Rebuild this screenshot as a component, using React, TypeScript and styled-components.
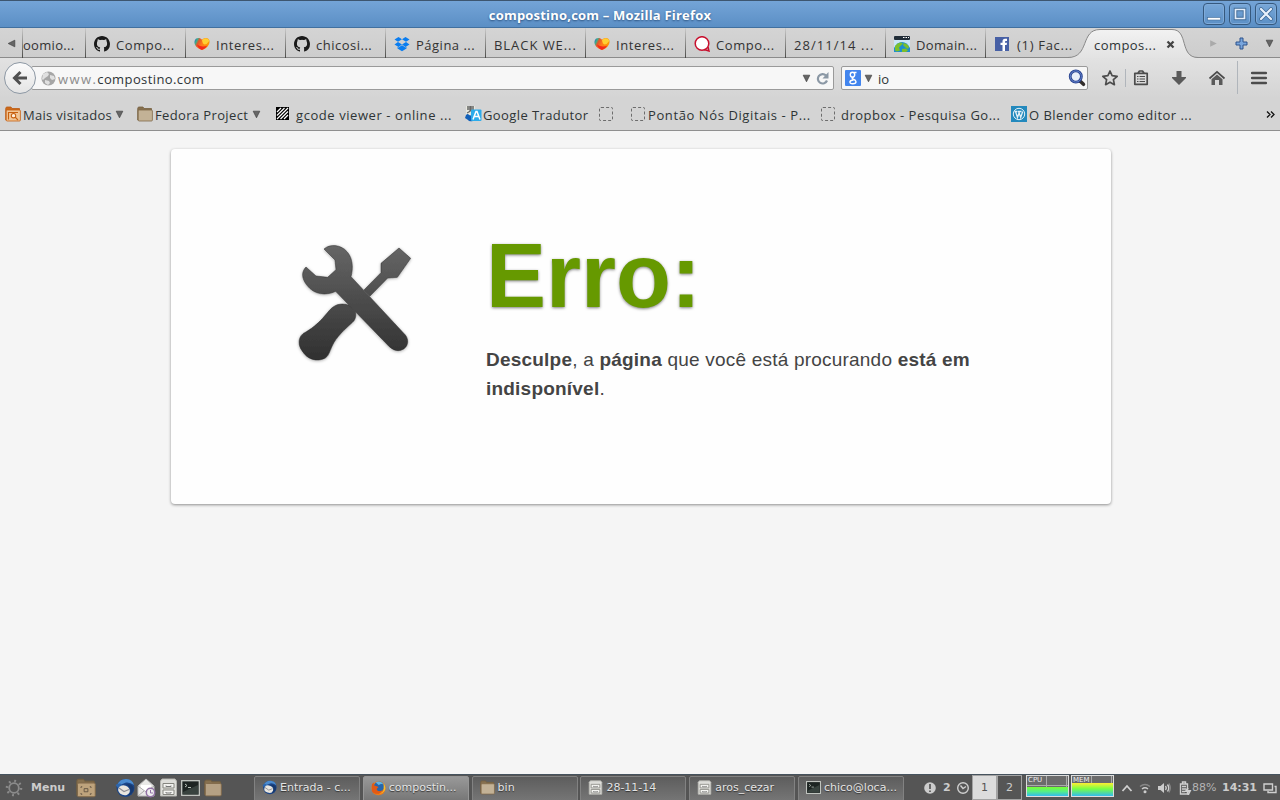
import React from "react";
import styled, { createGlobalStyle } from "styled-components";

const uiFont = `"Open Sans", "Noto Sans", sans-serif`;
const panelFont = `"DejaVu Sans", sans-serif`;

const GlobalStyle = createGlobalStyle`
  html, body { margin: 0; padding: 0; overflow: hidden; }
  * { box-sizing: border-box; }
  svg { display: block; flex: none; }
`;

const Desktop = styled.div`
  width: 1280px;
  height: 800px;
  display: flex;
  flex-direction: column;
  overflow: hidden;
  background: #f5f5f5;
  font-family: ${uiFont};
  font-size: 13px;
  color: #2e3436;
`;

const Label = styled.span<{ $ls?: number; $ml?: number; $w?: number }>`
  flex: none;
  white-space: pre;
  letter-spacing: ${(p) => p.$ls ?? 0}px;
  margin-left: ${(p) => p.$ml ?? 0}px;
  ${(p) => (p.$w !== undefined ? `width: ${p.$w}px;` : "")}
`;

const IconSlot = styled.span<{ $ml?: number; $mt?: number }>`
  flex: none;
  margin-left: ${(p) => p.$ml ?? 0}px;
  margin-top: ${(p) => p.$mt ?? 0}px;
`;

/* ---------- title bar ---------- */

const TitleBar = styled.header`
  height: 28px;
  flex: none;
  display: grid;
  grid-template-columns: 1200px 80px;
  border-top: 1px solid #3d5670;
  border-bottom: 1px solid #41709f;
  background: linear-gradient(#74a4d7, #5b8fc5);
`;

const WindowTitle = styled.h1`
  margin: 0;
  padding-top: 1px;
  text-align: center;
  font-size: 13px;
  line-height: 26px;
  font-weight: 700;
  color: #fff;
  letter-spacing: 0.2px;
  text-shadow: 0 1px 2px #2c5380;
`;

const WindowButtons = styled.div`
  display: flex;
  gap: 4px;
  padding: 2px 0 0 3px;
`;

const WindowButton = styled.button`
  width: 22px;
  height: 22px;
  padding: 0;
  display: grid;
  place-items: center;
  border: 1px solid #36597e;
  border-radius: 4px;
  background: linear-gradient(#78a7d8, #5c90c6);
  box-shadow: inset 0 0 0 1px #7fabd9;
`;

/* ---------- tabs ---------- */

const TabBar = styled.nav`
  height: 30px;
  flex: none;
  display: flex;
  background: linear-gradient(#d4d4d4, #cdcdcd);
  box-shadow: inset 0 -1px #8b8b8b;
`;

const ScrollLeft = styled.div`
  width: 22px;
  display: flex;
  padding: 11px 0 0 7px;
`;

const Tab = styled.div<{ $w: number; $last?: boolean }>`
  width: ${(p) => p.$w}px;
  height: 30px;
  flex: none;
  display: flex;
  align-items: center;
  padding: 3px 0 0 8px;
  overflow: hidden;
  color: #333;
  border-right: ${(p) => (p.$last ? 0 : 1)}px solid;
  border-image: linear-gradient(#cfcfcf, #474744) 1;
`;

const ClippedTab = styled(Tab)`
  padding-left: 0;
  border-left: 1px solid;
`;

const ActiveTab = styled.div`
  width: 130px;
  height: 30px;
  margin-left: -14px;
  flex: none;
  display: grid;
  position: relative;
  > * { grid-area: 1 / 1; }
`;

const ActiveTabContent = styled.div`
  display: flex;
  align-items: center;
  padding: 3px 0 0 26px;
  z-index: 1;
`;

const TabTools = styled.div`
  display: flex;
  padding-top: 9px;
`;

/* ---------- navigation ---------- */

const NavBar = styled.div`
  height: 40px;
  flex: none;
  display: flex;
  align-items: flex-start;
  background: linear-gradient(#e2e2e2, #d4d4d4);
`;

const BackButton = styled.button`
  width: 32px;
  height: 32px;
  margin: 4px 0 0 4px;
  padding: 0;
  flex: none;
  display: grid;
  place-items: center;
  border: 1px solid #8d98a4;
  border-radius: 50%;
  background: linear-gradient(#fbfbfb, #e4e4e4);
  z-index: 1;
`;

const Field = styled.div<{ $w: number; $ml: number; $pl: number }>`
  width: ${(p) => p.$w}px;
  height: 24px;
  margin: 8px 0 0 ${(p) => p.$ml}px;
  padding-left: ${(p) => p.$pl}px;
  flex: none;
  display: flex;
  align-items: center;
  border: 1px solid #9a9a9a;
  border-radius: 2px;
  background: #f7f7f7;
`;

const FieldText = styled(Label)`
  padding-top: 2px;
`;

const Muted = styled.span`
  color: #8c8c8c;
  letter-spacing: 1.4px;
`;

const NavSeparator = styled.i<{ $ml: number; $mt: number; $h: number }>`
  width: 1px;
  height: ${(p) => p.$h}px;
  margin: ${(p) => p.$mt}px 0 0 ${(p) => p.$ml}px;
  background: #b0b5bb;
`;

/* ---------- bookmarks ---------- */

const Bookmarks = styled.div`
  height: 33px;
  flex: none;
  display: flex;
  align-items: center;
  padding-top: 1px;
  background: #d4d4d4;
  border-bottom: 1px solid #8f8f8f;
`;

const EmptyIcon = styled.i<{ $ml: number }>`
  width: 14px;
  height: 14px;
  flex: none;
  margin: -2px 0 0 ${(p) => p.$ml}px;
  border: 1px dashed #6d6d6d;
  border-radius: 2px;
`;

/* ---------- page ---------- */

const Page = styled.main`
  flex: 1;
  padding-top: 18px;
  background: #f5f5f5;
`;

const Card = styled.section`
  width: 940px;
  height: 355px;
  margin-left: 171px;
  display: flex;
  background: #fefefe;
  border-radius: 4px;
  box-shadow: 0 1px 3px rgba(0, 0, 0, 0.42);
  font-family: "Liberation Sans", Arial, sans-serif;
  color: #444;
`;

const ToolsPicture = styled.div`
  width: 315px;
  flex: none;
  padding: 81px 0 0 109px;
`;

const ErrorTitle = styled.h2`
  margin: 76px 0 0;
  font-size: 90px;
  line-height: 102px;
  font-weight: 700;
  color: #690;
  text-shadow: 0 1px 3px rgba(0, 0, 0, 0.5);
`;

const ErrorText = styled.p`
  width: 520px;
  margin: 18px 0 0;
  font-size: 19px;
  line-height: 29px;
  letter-spacing: 0.21px;
`;

/* ---------- desktop panel ---------- */

const Panel = styled.footer`
  height: 26px;
  flex: none;
  display: flex;
  align-items: center;
  border-top: 1px solid #46535e;
  background: #555;
  font-family: ${panelFont};
  font-size: 11px;
  color: #e4e4e4;
`;

const PanelGroup = styled.div<{ $w: number }>`
  width: ${(p) => p.$w}px;
  height: 25px;
  flex: none;
  display: flex;
  align-items: center;
`;

const PanelBold = styled(Label)`
  font-weight: 700;
  color: #ccc;
`;

const PanelDim = styled(Label)`
  color: #b4b4b4;
`;

const TaskList = styled.div`
  width: 656px;
  height: 25px;
  flex: none;
  display: grid;
  grid-template-columns: repeat(6, 106px);
  column-gap: 2.8px;
`;

const Task = styled.div<{ $active?: boolean }>`
  height: 25px;
  margin-top: 1px;
  padding: 0 0 2px 7px;
  display: flex;
  align-items: center;
  gap: 3px;
  overflow: hidden;
  white-space: pre;
  border: 1px solid ${(p) => (p.$active ? "#969696" : "#828282")};
  border-radius: 2px 2px 0 0;
  background: ${(p) => (p.$active ? "linear-gradient(#999, #777)" : "linear-gradient(#5d5d5d, #757575)")};
  text-shadow: 0 1px 1px #333;
`;

const Workspace = styled.div<{ $active?: boolean }>`
  width: 25px;
  height: 25px;
  flex: none;
  display: grid;
  place-items: center;
  border: 1px solid #a3a3a3;
  color: ${(p) => (p.$active ? "#555" : "#ccc")};
  background: ${(p) => (p.$active ? "#dcdcdc" : "#555")};
`;

const Meter = styled.div<{ $level: number; $ml: number; $hot?: boolean }>`
  width: 43px;
  height: 22px;
  margin: -3px 0 0 ${(p) => p.$ml}px;
  padding-left: 1px;
  flex: none;
  border: 1px solid #ddd;
  font-size: 7px;
  line-height: 8px;
  color: #eee;
  background:
    linear-gradient(${(p) => (p.$hot ? "#fe3, #7f4 45%, #3be" : "#7f3, #5e8 50%, #3be")}) bottom / 100% ${(p) => p.$level}px no-repeat,
    repeating-linear-gradient(90deg, transparent 0 19px, #aaa 19px 20px),
    linear-gradient(transparent 9px, #aaa 9px 10px, transparent 10px),
    #6b6b6b;
`;

/* ---------- icons ---------- */

const Triangle = ({ dir = "down", color = "#666" }: { dir?: "down" | "left" | "right"; color?: string }) => (
  <svg width="9" height="9" viewBox="0 0 9 9">
    <path
      d={dir === "down" ? "M1.200 1.200h6.600L4.500 7.800z" : dir === "left" ? "M7.800 1.200v6.600L1.200 4.500z" : "M1.200 1.200v6.600l6.600-3.300z"}
      fill={color}
      stroke="#444"
      strokeWidth={color === "#666" ? 0.7 : 0}
    />
  </svg>
);

const Github = () => (
  <svg width="16" height="16" viewBox="0 0 16 16">
    <path fill="#1a1a1a" d="M8 0C3.58 0 0 3.58 0 8c0 3.54 2.29 6.53 5.47 7.59.4.07.55-.17.55-.38 0-.19-.01-.82-.01-1.49-2.01.37-2.53-.49-2.69-.94-.09-.23-.48-.94-.82-1.13-.28-.15-.68-.52-.01-.53.63-.01 1.08.58 1.23.82.72 1.21 1.87.87 2.33.66.07-.52.28-.87.51-1.07-1.78-.2-3.64-.89-3.64-3.95 0-.87.31-1.59.82-2.15-.08-.2-.36-1.02.08-2.12 0 0 .67-.21 2.2.82a7.6 7.6 0 0 1 4 0c1.53-1.04 2.2-.82 2.2-.82.44 1.1.16 1.92.08 2.12.51.56.82 1.27.82 2.15 0 3.07-1.87 3.75-3.65 3.95.29.25.54.73.54 1.48 0 1.07-.01 1.93-.01 2.2 0 .21.15.46.55.38A8.01 8.01 0 0 0 16 8c0-4.42-3.58-8-8-8z" />
    <path fill="#d0d0d0" d="M4.2 4.2q2-.2 3.8-.2t3.8.2q1.2 1.3 1 3.2-.3 2.8-3.3 3.3l.6 1.2V16H6v-4l.5-1.3Q3.500 10.200 3.200 7.400 3 5.500 4.200 4.200z" />
  </svg>
);

const Heart = () => (
  <svg width="16" height="16" viewBox="0 0 16 16">
    <defs>
      <linearGradient id="heart" x1="0" y1=".1" x2="1" y2=".5">
        <stop offset="0" stopColor="#2a62c8" /><stop offset=".17" stopColor="#3bb28a" />
        <stop offset=".3" stopColor="#e2572c" /><stop offset=".55" stopColor="#ff7a1a" /><stop offset="1" stopColor="#ff9d00" />
      </linearGradient>
    </defs>
    <path d="M8 14C3 12.500 0 9 .5 5.500 1 1.500 6 1.200 8 3.800 10.500 1.200 15 1.500 15.500 5 16 9 12 13 8 14z" fill="url(#heart)" />
    <path d="M8 4c2.500-3 7-2 7.300 1Q13 8.500 10.500 8.500 8.500 8 8 4z" fill="#ffd032" />
    <path d="M3 8.500Q8 12 13.500 9.500 11.500 13 8 14 4.500 13 3 8.500z" fill="#f5281c" />
  </svg>
);

const Dropbox = () => (
  <svg width="16" height="16" viewBox="0 0 16 16" fill="#0a7df0">
    <path d="M4.500 1L8 3.300 4 5.800 .5 3.500zM11.500 1L8 3.300 12 5.800l3.500-2.300zM4 6.100l4 2.500L4.500 11 .5 8.500zM12 6.100L8 8.600l3.500 2.400 4-2.500zM8 9.300l3.500 2.300 1-.6v1.500L8 15.200l-4.500-2.700V11l1 .6z" />
  </svg>
);

const RedQ = () => (
  <svg width="16" height="16" viewBox="0 0 16 16">
    <circle cx="8" cy="7.500" r="6.800" fill="#fff" stroke="#c8102e" strokeWidth="1.500" />
    <path d="M10 13.500l5 1.500-1-4" fill="none" stroke="#c8102e" strokeWidth="1.500" />
  </svg>
);

const DomainIcon = () => (
  <svg width="16" height="16" viewBox="0 0 16 16">
    <rect width="16" height="16" rx="1" fill="#cbe5f5" />
    <rect width="16" height="4" rx="1" fill="#222d38" />
    <path d="M9 1.500h1.500M11.500 1.500H13M14 1.500h1" stroke="#fff" />
    <path d="M0 16V12q3-6 8-6t8 6v4z" fill="#1c8ed0" />
    <path d="M1 10q3-4 6-3.500l2 1-2 2-2 2 1 3-3 1-2-1zM10 7q4 1 5 4l-1 2-3-2-2-2zM8 13l4-.500 2 2-2 1.500H8z" fill="#7bbf2b" />
  </svg>
);

const Facebook = () => (
  <svg width="14" height="14" viewBox="0 0 14 14">
    <rect width="14" height="14" fill="#4760a5" />
    <path d="M7.500 14V8H5.500V5.800h2V4.500Q7.500 1.800 10 1.800h2V4h-1.200Q10 4 10 4.800v1h2L11.700 8H10v6z" fill="#fff" />
  </svg>
);

const Globe = () => (
  <svg width="15" height="15" viewBox="0 0 15 15">
    <circle cx="7.500" cy="7.500" r="7" fill="#a6a6a6" />
    <path d="M2 3l4-2 2 2-1 2-3 2-2 2-1-1zM9 4l4 1 1 3-3 1-2-2zM4 9l4 1 1 2-2 2-3-2z" fill="#e0e0e0" />
  </svg>
);

const FolderIcon = ({ w = 16, color = "#b5a184", mark }: { w?: number; color?: string; mark?: "camera" | "search" }) => (
  <svg width={w} height={w} viewBox="0 0 16 16">
    <path d="M.7 14V2.500Q.7 1 2 1h4l1 1.500h7.500V14z" fill={mark === "search" ? "#cb6a1c" : "#86704f"} stroke={mark === "search" ? "#bd5b12" : "#76603f"} strokeWidth=".8" />
    <rect x="1.200" y="4" width="14.200" height="11" rx="1" fill={color} stroke={mark === "search" ? "#c8600f" : "#80694a"} strokeWidth=".8" />
    {mark === "camera" && <path d="M5 7H4v1M11 7h1v1M4 12v1h1M12 12v1h-1M6.500 8.500h3v2.500h-3z" fill="none" stroke="#5f5140" strokeWidth=".7" />}
    {mark === "search" && <g fill="none" stroke="#c8600f" strokeWidth="1.100"><path d="M3.500 13.500V6.500h9.500" /><circle cx="8.500" cy="9.700" r="2.200" fill="#fff0dd" /><path d="M10 11l3 3" /></g>}
  </svg>
);

const Stripes = () => (
  <svg width="13" height="13" viewBox="0 0 13 13">
    <rect width="13" height="13" fill="#000" />
    <path d="M1 5l4-4M1 8.500L8.500 1M1 12L12 1M4.500 12L12 4.500M8 12l4-4" stroke="#fff" strokeWidth="1.200" />
  </svg>
);

const TranslateIcon = () => (
  <svg width="17" height="17" viewBox="0 0 17 17">
    <path d="M1 1h9v10H1z" fill="#e7e8df" />
    <path d="M2 2h7M2 4h7M5.500 1v4Q5 7 2 8M5.500 5q1 2 3 3" stroke="#666" strokeWidth="1.300" fill="none" />
    <path d="M1 10q2-2 3 0l4 1v5q-4 1-5-1l-3-2z" fill="#1260b9" />
    <rect x="6" y="4.500" width="10.500" height="11.500" rx="1" fill="#2daceb" />
    <path d="M8 14.500l3-8h1l3 8M9.500 11.500h4" stroke="#fff" strokeWidth="1.500" fill="none" />
  </svg>
);

const WordPress = () => (
  <svg width="16" height="16" viewBox="0 0 16 16">
    <rect width="16" height="16" fill="#2389bd" />
    <circle cx="8" cy="8" r="5.700" fill="none" stroke="#e3f0f7" />
    <path d="M3.500 5.500h3M7 5.500h3.500M4.500 5.500l2 6 1.700-5M7.700 5.500l2 6 2-6" stroke="#e3f0f7" strokeWidth="1.300" fill="none" />
  </svg>
);

const GoogleIcon = () => (
  <svg width="16" height="16" viewBox="0 0 16 16">
    <rect width="16" height="16" rx="1" fill="#4285ee" />
    <g fill="none" stroke="#fff" strokeWidth="1.400">
      <ellipse cx="7.500" cy="4.700" rx="2.200" ry="2.400" />
      <path d="M9 2.500h2.500M8.500 7Q6 8 8 9q3 1.200 3 2.700 0 2-3.200 2T5 12q0-1.800 3.500-2" />
    </g>
  </svg>
);

const SearchIcon = () => (
  <svg width="18" height="18" viewBox="0 0 18 18">
    <path d="M12 12l3.500 3.300" stroke="#332e2c" strokeWidth="3.500" strokeLinecap="round" />
    <circle cx="7.800" cy="7.500" r="5.600" fill="#e9eef9" stroke="#2b448f" strokeWidth="2.800" />
    <circle cx="7.800" cy="7.500" r="5.600" fill="none" stroke="#6584cf" />
  </svg>
);

const ToolIcon = ({ kind }: { kind: "star" | "list" | "download" | "home" | "menu" }) => (
  <svg width="18" height="18" viewBox="0 0 18 18" fill="none" stroke="#4c4c4c" strokeWidth="1.700">
    {kind === "star" && <path d="M9 2l2.100 4.700 5.100.6-3.800 3.400 1 5L9 13.200l-4.400 2.500 1-5-3.800-3.400 5.100-.6z" strokeLinejoin="round" />}
    {kind === "list" && <><path d="M2.800 4.300h12.400v11H2.800zM6 4L7.500 2h3L12 4" strokeLinejoin="round" /><path d="M5 7.500h1.500M7.500 7.500H13M5 10h1.500M7.500 10H13M5 12.500h1.500M7.500 12.500H13" strokeWidth="1.200" /></>}
    {kind === "download" && <path d="M6.500 2h5v6H16v1L9 16 2 9V8h4.500z" fill="#5a5a5a" stroke="none" />}
    {kind === "home" && <><path d="M1.500 9.500L9 2.800l7.500 6.700" /><path d="M3.500 10.200L9 5.500l5.500 4.700V16H11v-5H7v5H3.500z" fill="#5a5a5a" stroke="none" /></>}
    {kind === "menu" && <path d="M2.200 4h13.600M2.200 9h13.600M2.200 14h13.600" strokeWidth="2.600" strokeLinecap="round" />}
  </svg>
);

const Thunderbird = ({ w = 20 }: { w?: number }) => (
  <svg width={w} height={w} viewBox="0 0 20 20">
    <circle cx="10.500" cy="10" r="9" fill="#1c4688" />
    <path d="M2 7Q5 .5 11.500 1q6 .5 7.500 6-4-3-8-2.500L5 7z" fill="#4a8bd0" />
    <path d="M.5 7q2-2 5-1.500l2 2L3 10z" fill="#2d66ad" />
    <ellipse cx="9" cy="12.300" rx="6" ry="4.800" fill="#e9e6df" transform="rotate(20 9 12.300)" />
    <path d="M4 10l5 3.500 5-2" stroke="#8f8f95" strokeWidth="1.200" fill="none" />
    <path d="M9 7q5-1 6.500 5 .5 3-3 6 6-2 6.300-8Q17 4.500 9 7z" fill="#17396f" />
  </svg>
);

const MailIcon = () => (
  <svg width="19" height="20" viewBox="0 0 19 20">
    <path d="M1 8l8-7 8 7v10H1z" fill="#e9e9e7" stroke="#bbb" />
    <path d="M4 7h10v5l-5 3-5-4z" fill="#fff" />
    <path d="M1 8l8 6 8-6M1 18l6-5" stroke="#a9a9a9" fill="none" />
    <circle cx="13.500" cy="14.500" r="4.200" fill="#eee" stroke="#9272a5" strokeWidth="1.500" />
    <path d="M13.500 12v3H16" stroke="#9272a5" fill="none" />
  </svg>
);

const Cabinet = ({ w = 19 }: { w?: number }) => (
  <svg width={w} height={w} viewBox="0 0 19 19">
    <path d="M3 1h13l1.500 2v15h-16V3z" fill="#dededa" stroke="#b5b5b0" />
    <path d="M4 5.500h11v4.500H4zM4 12h11v4.500H4z" fill="#f3f3f0" stroke="#85857f" />
    <path d="M7 7.500v1h5v-1M7 14v1h5v-1" fill="none" stroke="#777" />
  </svg>
);

const Terminal = ({ w = 19, h = 16 }: { w?: number; h?: number }) => (
  <svg width={w} height={h} viewBox="0 0 19 16" preserveAspectRatio="none">
    <rect x=".7" y=".7" width="17.600" height="14.600" fill="#1d2422" stroke="#c5c9c4" strokeWidth="1.300" />
    <path d="M2 12L17 5v9H2z" fill="#38423e" />
    <path d="M4 4l2 1.500L4 7M7 7.500h3" stroke="#b9c2b9" fill="none" />
  </svg>
);

const Firefox = () => (
  <svg width="15" height="16" viewBox="0 0 16 16">
    <circle cx="8" cy="8.200" r="7.500" fill="#ec7c17" />
    <circle cx="8.500" cy="6.500" r="5.500" fill="#2766ac" />
    <path d="M5 2q5-2.500 8.500 2-4-1-5 1z" fill="#61b4e1" />
    <path d="M1 4l2-2v3l3 1 2 1-2 2 1 2q3 1 5-1-2 5-7 4T1 9z" fill="#e25a15" />
    <path d="M13.500 3q3 5 1 8t-6 3.500q6-2 5-7z" fill="#f7c02d" />
  </svg>
);

const Gear = () => (
  <svg width="18" height="18" viewBox="0 0 18 18" fill="none" stroke="#8b8b8b">
    <circle cx="9" cy="9" r="4.800" strokeWidth="1.800" />
    <circle cx="9" cy="9" r="7" strokeWidth="2.600" strokeDasharray="1.800 3.700" />
  </svg>
);

const TrayIcon = ({ kind }: { kind: "alert" | "clock" | "up" | "wifi" | "sound" | "battery" | "windows" }) => (
  <svg width="14" height="14" viewBox="0 0 14 14" fill="none" stroke="#cfcfcf" strokeWidth="1.400">
    {kind === "alert" && <><circle cx="7" cy="7" r="5.800" fill="#ccc" stroke="none" /><path d="M7 3v5M7 9.500V11" stroke="#555" strokeWidth="1.700" /></>}
    {kind === "clock" && <><circle cx="7" cy="7" r="5.300" /><path d="M4.500 4.500L7 7.500l3-2" /></>}
    {kind === "up" && <path d="M2.500 10L7 5l4.500 5" strokeWidth="1.800" />}
    {kind === "wifi" && <><path d="M2 5.500q5-4 10 0" stroke="#888" /><path d="M4 8q3-2.500 6 0" /><circle cx="7" cy="10.800" r="1.500" fill="#ccc" stroke="none" /></>}
    {kind === "sound" && <><path d="M1 5h2.500L7 2v10L3.500 9H1z" fill="#ccc" stroke="none" /><path d="M8.500 5q1.500 2 0 4M10.500 3.500q2.500 3.500 0 7" /><path d="M12 2.500q2.500 4.500 0 9" stroke="#888" /></>}
    {kind === "battery" && <><path d="M2.500 3h7v10h-7zM4.500 2.500V1h3v1.500M4 5.500h4M4 8h4M4 10.500h3" /><path d="M10 7l-2 3h4l-2 4" strokeWidth="1.800" /></>}
    {kind === "windows" && <><path d="M1 3h8.500v6H1z" /><path d="M11.500 5.500h1.500v6H5V10" /></>}
  </svg>
);

const ToolsDrawing = () => (
  <svg width="150" height="145" viewBox="0 0 450 435">
    <defs>
      <linearGradient id="metal" gradientUnits="userSpaceOnUse" x1="0" y1="45" x2="0" y2="390">
        <stop offset="0" stopColor="#666" /><stop offset="1" stopColor="#303030" />
      </linearGradient>
      <filter id="soft" x="-10%" y="-10%" width="120%" height="120%">
        <feDropShadow dx="0" dy="2" stdDeviation="5" floodColor="#000" floodOpacity=".35" />
      </filter>
    </defs>
    <g fill="url(#metal)" stroke="#2b2b2b" strokeOpacity=".5" strokeWidth="3" filter="url(#soft)">
      <path d="M357 54L392 85 352 142 323 144 270 198 252 180 303 128V100z" />
      <path d="M132 57C151 40 184 45 201 65C220 86 219 117 213 140L376 315C391 334 381 361 354 362Q341 362 328 350L167 184C137 198 102 194 81 166C64 145 64 125 78 111L108 138 143 142 168 119 165 90z" />
      <path d="M207 226C188 219 171 222 158 232C138 248 124 281 69 311C54 323 54 346 66 362C82 389 111 397 136 384C150 375 151 351 168 328C187 302 210 285 222 272C228 264 228 253 226 246z" />
    </g>
  </svg>
);

const tabs: { icon?: React.ReactNode; text: string; ml?: number; ls: number }[] = [
  { icon: <Github />, text: "Compo...", ml: 6, ls: 0.57 },
  { icon: <Heart />, text: "Interes...", ml: 6, ls: 0.6 },
  { icon: <Github />, text: "chicosi...", ml: 6, ls: 0.5 },
  { icon: <Dropbox />, text: "Página ...", ml: 6, ls: 0.5 },
  { text: "BLACK WE...", ls: 0.95 },
  { icon: <Heart />, text: "Interes...", ml: 6, ls: 0.6 },
  { icon: <RedQ />, text: "Compo...", ml: 6, ls: 0.57 },
  { text: "28/11/14 ...", ls: 1.05 },
  { icon: <DomainIcon />, text: "Domain...", ml: 6, ls: 0.35 },
  { icon: <Facebook />, text: "(1) Fac...", ml: 8, ls: 0.7 },
];

export default function App() {
  return (
    <Desktop>
      <GlobalStyle />
      <TitleBar>
        <WindowTitle>compostino,com – Mozilla Firefox</WindowTitle>
        <WindowButtons>
          <WindowButton><svg width="14" height="14" viewBox="0 0 14 14"><rect x=".5" y="10.500" width="13" height="2.500" fill="#fff" stroke="#416b97" strokeWidth=".6" /></svg></WindowButton>
          <WindowButton><svg width="14" height="14" viewBox="0 0 14 14" fill="none"><path d="M2.500 2.500h9v9h-9z" stroke="#416b97" strokeWidth="3.500" /><path d="M2.500 2.500h9v9h-9z" stroke="#e4eefa" strokeWidth="1.700" /></svg></WindowButton>
          <WindowButton><svg width="14" height="14" viewBox="0 0 14 14"><path d="M2 2l10 10M12 2L2 12" stroke="#416b97" strokeWidth="3.800" strokeLinecap="round" /><path d="M2 2l10 10M12 2L2 12" stroke="#e9f1fb" strokeWidth="2.200" strokeLinecap="round" /></svg></WindowButton>
        </WindowButtons>
      </TitleBar>

      <TabBar>
        <ScrollLeft><Triangle dir="left" /></ScrollLeft>
        <ClippedTab $w={64}><Label $ls={0.3}>oomio...</Label></ClippedTab>
        {tabs.map((t, i) => (
          <Tab key={i} $w={i === 9 ? 96 : 100} $last={i === 9}>
            {t.icon && <IconSlot $ml={t.ml === 8 ? 1 : 0} $mt={-2}>{t.icon}</IconSlot>}
            <Label $ml={t.ml} $ls={t.ls}>{t.text}</Label>
          </Tab>
        ))}
        <ActiveTab>
          <svg width="130" height="30" viewBox="0 0 130 30">
            <defs><linearGradient id="tab" x1="0" y1="0" x2="0" y2="1"><stop offset="0" stopColor="#f2f2f2" /><stop offset="1" stopColor="#e2e2e2" /></linearGradient></defs>
            <path d="M0 29.500C22 29.500 12 1.500 32 1.500H104C121 1.500 111 29.500 130 29.500V31H0z" fill="url(#tab)" stroke="#888" />
          </svg>
          <ActiveTabContent>
            <Label $ls={0.45} $w={72}>compos...</Label>
            <svg width="9" height="9" viewBox="0 0 9 9"><path d="M1.500 1.500l6 6M7.500 1.500l-6 6" stroke="#444" strokeWidth="2.300" /></svg>
          </ActiveTabContent>
        </ActiveTab>
        <TabTools>
          <IconSlot $ml={11} $mt={2}><Triangle dir="right" color="#aaa" /></IconSlot>
          <IconSlot $ml={17}><svg width="13" height="13" viewBox="0 0 13 13"><path d="M5 1h3v4h4v3H8v4H5V8H1V5h4z" fill="#78a5dc" stroke="#2c528c" /></svg></IconSlot>
          <IconSlot $ml={17} $mt={2}><Triangle /></IconSlot>
        </TabTools>
      </TabBar>

      <NavBar>
        <BackButton><svg width="18" height="18" viewBox="0 0 18 18"><path d="M9.500 3L3.500 9l6 6M4 9H16" fill="none" stroke="#505050" strokeWidth="3" /></svg></BackButton>
        <Field $w={803} $ml={-5} $pl={9}>
          <Globe />
          <FieldText $ml={2} $ls={0.4} $w={744}><Muted>www.</Muted>compostino.com</FieldText>
          <Triangle />
          <IconSlot $ml={5}><svg width="13" height="13" viewBox="0 0 13 13"><path d="M10 3.500A4.700 4.700 0 1 0 11 8.500" fill="none" stroke="#8b98a5" strokeWidth="2.200" /><path d="M12.500 0v6.500H6.500z" fill="#8b98a5" /></svg></IconSlot>
        </Field>
        <Field $w={247} $ml={7} $pl={3}>
          <GoogleIcon />
          <IconSlot $ml={3}><Triangle /></IconSlot>
          <FieldText $ml={5} $w={190}>io</FieldText>
          <SearchIcon />
        </Field>
        <IconSlot $ml={13} $mt={11}><ToolIcon kind="star" /></IconSlot>
        <NavSeparator $ml={6} $mt={11} $h={18} />
        <IconSlot $ml={6} $mt={11}><ToolIcon kind="list" /></IconSlot>
        <IconSlot $ml={20} $mt={11}><ToolIcon kind="download" /></IconSlot>
        <IconSlot $ml={20} $mt={11}><ToolIcon kind="home" /></IconSlot>
        <NavSeparator $ml={11} $mt={3} $h={33} />
        <IconSlot $ml={12} $mt={11}><ToolIcon kind="menu" /></IconSlot>
      </NavBar>

      <Bookmarks>
        <IconSlot $ml={5} $mt={-2}><FolderIcon color="#f0c596" mark="search" /></IconSlot>
        <Label $ml={2} $ls={0.3} $w={92}>Mais visitados</Label>
        <Triangle />
        <IconSlot $ml={13} $mt={-2}><FolderIcon color="#c3b296" /></IconSlot>
        <Label $ml={2} $ls={0.37} $w={97}>Fedora Project</Label>
        <Triangle />
        <IconSlot $ml={15} $mt={-2}><Stripes /></IconSlot>
        <Label $ml={7} $ls={0.57} $w={168}>gcode viewer - online ...</Label>
        <IconSlot $ml={1} $mt={-2}><TranslateIcon /></IconSlot>
        <Label $ml={1} $ls={0.4} $w={116}>Google Tradutor</Label>
        <EmptyIcon $ml={0} />
        <EmptyIcon $ml={18} />
        <Label $ml={3} $ls={0.6} $w={164}>Pontão Nós Digitais - P...</Label>
        <EmptyIcon $ml={9} />
        <Label $ml={6} $ls={0.5} $w={169}>dropbox - Pesquisa Go...</Label>
        <IconSlot $ml={1} $mt={-2}><WordPress /></IconSlot>
        <Label $ml={2} $ls={0.46} $w={237}>O Blender como editor ...</Label>
        <svg width="9" height="7" viewBox="0 0 9 7"><path d="M1 .5l3 3-3 3M5 .5l3 3-3 3" fill="none" stroke="#111" strokeWidth="1.300" /></svg>
      </Bookmarks>

      <Page>
        <Card>
          <ToolsPicture><ToolsDrawing /></ToolsPicture>
          <div>
            <ErrorTitle>Erro:</ErrorTitle>
            <ErrorText><b>Desculpe</b>, a <b>página</b> que você está procurando <b>está em indisponível</b>.</ErrorText>
          </div>
        </Card>
      </Page>

      <Panel>
        <PanelGroup $w={254}>
          <IconSlot $ml={5}><Gear /></IconSlot>
          <PanelBold $ml={8} $w={45}>Menu</PanelBold>
          <FolderIcon w={20} color="#bea37c" mark="camera" />
          <IconSlot $ml={19}><Thunderbird /></IconSlot>
          <IconSlot $ml={2}><MailIcon /></IconSlot>
          <IconSlot $ml={3}><Cabinet /></IconSlot>
          <IconSlot $ml={3}><Terminal /></IconSlot>
          <IconSlot $ml={4}><FolderIcon w={18} /></IconSlot>
        </PanelGroup>
        <TaskList>
          <Task><Thunderbird w={15} />Entrada - c...</Task>
          <Task $active><Firefox />compostin...</Task>
          <Task><FolderIcon w={15} color="#c3b296" />bin</Task>
          <Task><Cabinet w={15} />28-11-14</Task>
          <Task><Cabinet w={15} />aros_cezar</Task>
          <Task><Terminal w={15} h={13} />chico@loca...</Task>
        </TaskList>
        <IconSlot $ml={13}><TrayIcon kind="alert" /></IconSlot>
        <PanelBold $ml={6} $w={13}>2</PanelBold>
        <TrayIcon kind="clock" />
        <IconSlot $ml={2} />
        <Workspace $active>1</Workspace>
        <Workspace>2</Workspace>
        <Meter $level={9} $ml={4}>CPU</Meter>
        <Meter $level={13} $ml={2} $hot>MEM</Meter>
        <IconSlot $ml={6}><TrayIcon kind="up" /></IconSlot>
        <IconSlot $ml={4}><TrayIcon kind="wifi" /></IconSlot>
        <IconSlot $ml={5}><TrayIcon kind="sound" /></IconSlot>
        <IconSlot $ml={7}><TrayIcon kind="battery" /></IconSlot>
        <PanelDim $ml={0} $w={30}>88%</PanelDim>
        <PanelBold $w={41}>14:31</PanelBold>
        <TrayIcon kind="windows" />
      </Panel>
    </Desktop>
  );
}
